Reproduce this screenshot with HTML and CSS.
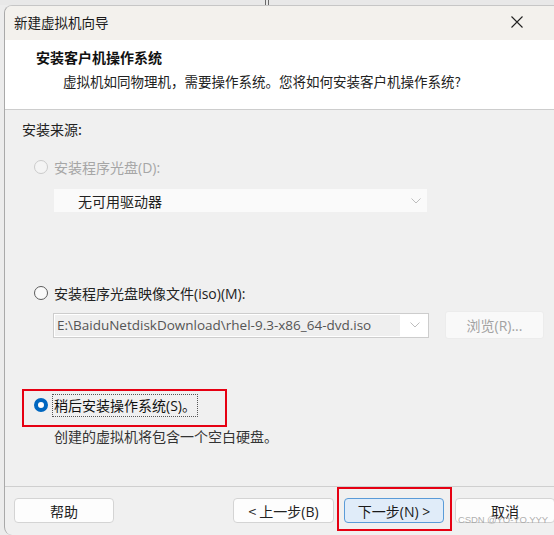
FILE: index.html
```html
<!DOCTYPE html>
<html lang="zh-CN">
<head>
  <meta charset="UTF-8">
  <title>新建虚拟机向导</title>
  <link rel="stylesheet" href="styles.css">
</head>
<body>

<div class="backdrop"><span class="behind-edge"></span></div>

<div class="wizard">
  <div class="titlebar">
    <span class="title">新建虚拟机向导</span>
    <svg class="close" width="12" height="12" viewBox="0 0 12 12">
      <path d="M0.5 0.5 L11.5 11.5 M11.5 0.5 L0.5 11.5" stroke="#222" stroke-width="1.1" fill="none"/>
    </svg>
  </div>

  <div class="header">
    <div class="heading">安装客户机操作系统</div>
    <div class="subheading">虚拟机如同物理机，需要操作系统。您将如何安装客户机操作系统?</div>
  </div>

  <div class="content">
    <div class="group-label">安装来源:</div>

    <div class="option disabled">
      <span class="radio"></span>
      <span class="option-text">安装程序光盘<span class="latin">(D):</span></span>
    </div>
    <div class="select drive">
      <span>无可用驱动器</span>
      <svg class="chevron" width="10" height="6" viewBox="0 0 10 6">
        <path d="M0.5 0.5 L5 5 L9.5 0.5" stroke="#bdbdbd" stroke-width="1" fill="none"/>
      </svg>
    </div>

    <div class="option iso">
      <span class="radio"></span>
      <span class="option-text">安装程序光盘映像文件<span class="latin">(iso)(M):</span></span>
    </div>
    <div class="iso-row">
      <div class="combo">
        <span class="combo-value">E:\BaiduNetdiskDownload\rhel-9.3-x86_64-dvd.iso</span>
        <svg class="chevron" width="10" height="6" viewBox="0 0 10 6">
          <path d="M0.5 0.5 L5 5 L9.5 0.5" stroke="#bdbdbd" stroke-width="1" fill="none"/>
        </svg>
      </div>
      <button class="browse" disabled>浏览<span class="latin">(R)...</span></button>
    </div>

    <div class="option later">
      <span class="radio checked"></span>
      <span class="option-text focus">稍后安装操作系统<span class="latin">(S)</span>。</span>
      <span class="mark later-mark"></span>
    </div>
    <div class="hint">创建的虚拟机将包含一个空白硬盘。</div>
  </div>

  <div class="footer">
    <button class="btn help">帮助</button>
    <button class="btn back">&lt; 上一步<span class="latin">(B)</span></button>
    <button class="btn next"><span>下一步<span class="latin">(N) &gt;</span></span><span class="mark next-mark"></span></button>
    <button class="btn cancel">取消</button>
    <span class="watermark">CSDN @YO-YO.YYY</span>
  </div>
</div>

</body>
</html>
```

FILE: styles.css
```css
html, body {
  margin: 0;
  padding: 0;
}

body {
  width: 554px;
  height: 535px;
  overflow: hidden;
  background: #ececec;
  font-family: "Noto Sans CJK SC", "Noto Sans", sans-serif;
  font-size: 14px;
  color: #1a1a1a;
}

.backdrop {
  height: 5px;
  background: #e8e8e8;
  position: relative;
}

.behind-edge {
  position: absolute;
  left: 265px;
  top: 0;
  width: 2px;
  height: 5px;
  border-left: 1px solid #6a6a6a;
  border-right: 1px solid #6a6a6a;
}

.wizard {
  margin-left: 4px;
  width: 570px;
  height: 530px;
  border-left: 1px solid #a9a9a9;
  border-top: 1px solid #c6c6c6;
  border-radius: 8px 0 0 8px;
  overflow: hidden;
  background: #f0f0f0;
  box-sizing: border-box;
}

.titlebar {
  height: 34px;
  background: #f3f1ed;
  display: flex;
  align-items: center;
  padding-left: 9px;
  position: relative;
}

.title {
  font-size: 13.5px;
  color: #1a1a1a;
  margin-top: -2px;
}

.close {
  position: absolute;
  left: 506px;
  top: 10px;
}

.header {
  height: 70px;
  background: #fff;
  border-bottom: 1px solid #cdcdcd;
  padding-top: 7px;
  box-sizing: border-box;
}

.heading {
  margin-left: 31px;
  font-weight: bold;
  font-size: 14px;
  line-height: 20px;
  color: #111;
}

.subheading {
  margin-left: 58px;
  margin-top: 4px;
  font-size: 13.5px;
  line-height: 20px;
  color: #222;
}

.content {
  height: 377px;
  padding: 9px 0 0 17px;
  box-sizing: border-box;
  border-bottom: 1px solid #cfcfcf;
}

.group-label {
  line-height: 20px;
  color: #222;
}

.latin {
  font-family: "Open Sans", "Noto Sans", sans-serif;
}

.option {
  display: flex;
  align-items: center;
  height: 20px;
  margin-left: 12px;
  position: relative;
}

.option.disabled {
  margin-top: 18px;
  color: #a6a6a6;
}

.option.iso {
  margin-top: 71px;
  color: #222;
}

.option.later {
  margin-top: 56px;
  color: #111;
}

.radio {
  width: 14px;
  height: 14px;
  border-radius: 50%;
  border: 1px solid #5c5c5c;
  box-sizing: border-box;
  background: #fafafa;
  margin-right: 6px;
  flex-shrink: 0;
}

.disabled .radio {
  border-color: #cbcbcb;
  background: #f4f4f4;
}

.radio.checked {
  border: 4px solid #0067c0;
  background: #fff;
}

.focus {
  outline: 1px dotted #555;
  outline-offset: 0;
  padding: 0 1px;
  margin-left: -1px;
  line-height: 20px;
}

.select {
  margin: 12px 0 0 32px;
  width: 373px;
  height: 23px;
  background: #fafafa;
  display: flex;
  align-items: center;
  justify-content: space-between;
  padding: 0 6px 0 24px;
  box-sizing: border-box;
  color: #222;
}

.iso-row {
  display: flex;
  align-items: center;
  margin: 8px 0 0 31px;
  height: 28px;
}

.combo {
  width: 376px;
  height: 25px;
  border: 1px solid #cdcdcd;
  background: #fff;
  display: flex;
  align-items: center;
  box-sizing: border-box;
  padding: 1px;
}

.combo-value {
  flex: 1;
  height: 21px;
  line-height: 21px;
  background: #efefef;
  color: #555;
  font-family: "Open Sans", "Noto Sans", sans-serif;
  font-size: 13.5px;
  padding-left: 2px;
  white-space: nowrap;
  overflow: hidden;
  max-width: 350px;
}

.combo .chevron {
  margin: 0 7px 0 10px;
}

.browse {
  margin-left: 16px;
  width: 99px;
  height: 28px;
  background: #f9f9f9;
  border: 1px solid #ececec;
  border-radius: 3px;
  font-family: inherit;
  font-size: 14px;
  color: #a2a2a2;
  padding: 0;
}

.hint {
  margin: 11px 0 0 32px;
  line-height: 20px;
  color: #333;
}

.mark {
  position: absolute;
  border: 2px solid #e60012;
  box-sizing: border-box;
  pointer-events: none;
}

.later-mark {
  left: -12px;
  top: -6px;
  width: 205px;
  height: 38px;
}

.footer {
  display: flex;
  align-items: flex-start;
  padding: 11px 0 0 9px;
  position: relative;
}

.btn {
  height: 25px;
  width: 100px;
  background: #fdfdfd;
  border: 1px solid #d4d4d4;
  border-radius: 4px;
  font-family: inherit;
  font-size: 14px;
  color: #222;
  padding: 0;
  box-sizing: border-box;
  position: relative;
}

.back {
  margin-left: 119px;
  width: 101px;
}

.next {
  margin-left: 10px;
  background: #e0ecf9;
  border-color: #5a9bd8;
  color: #1a1a1a;
}

.cancel {
  margin-left: 11px;
}

.next-mark {
  left: -8px;
  top: -12px;
  right: -9px;
  bottom: -9px;
}

.watermark {
  position: absolute;
  left: 453px;
  top: 27px;
  font-family: "Liberation Sans", Arial, sans-serif;
  font-size: 9.5px;
  letter-spacing: -0.1px;
  white-space: nowrap;
  color: rgba(160, 160, 160, 0.85);
}
```
